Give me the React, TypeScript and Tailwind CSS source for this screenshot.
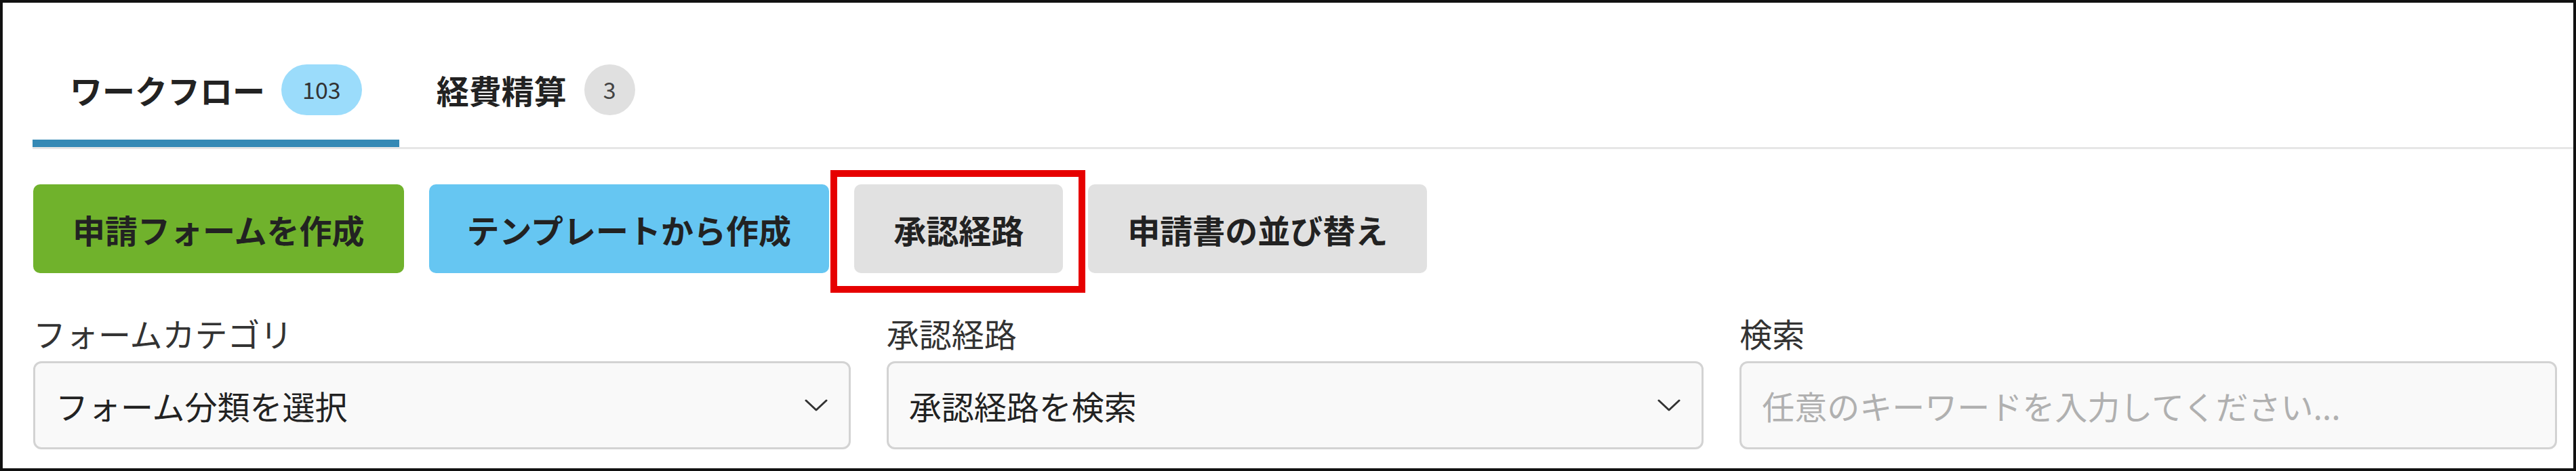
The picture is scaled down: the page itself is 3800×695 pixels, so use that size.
const tabs = [
  { label: 'ワークフロー', count: '103', active: true },
  { label: '経費精算', count: '3', active: false },
];

function Chevron() {
  return (
    <svg width="34" height="19" viewBox="0 0 34 19" fill="none" className="shrink-0">
      <polyline points="2,2 17,16 32,2" stroke="#333" strokeWidth="3" strokeLinecap="round" strokeLinejoin="round" />
    </svg>
  );
}

function SelectBox({ text }: { text: string }) {
  return (
    <div className="flex items-center justify-between h-[130px] rounded-[12px] border-[3px] border-[#d3d3d3] bg-[#f9f9f9] pl-[30px] pr-[31px]">
      <span className="text-[48px] text-[#222]">{text}</span>
      <Chevron />
    </div>
  );
}

export default function App() {
  return (
    <div className="h-[695px] w-[3800px] border-4 border-[#111] bg-white pt-[54px] pl-[44px] font-['Noto_Sans_CJK_JP','Noto_Sans',sans-serif] leading-none">
      {/* tabs */}
      <div className="flex border-b-[3px] border-[#e6e6e6]">
        {tabs.map(t => (
          <div
            key={t.label}
            className={
              t.active
                ? 'flex items-center gap-[24px] h-[159px] px-[55px] border-b-[11px] border-[#3589b5]'
                : 'flex items-center gap-[26px] h-[159px] pl-[55px] pr-[53px] border-b-[11px] border-transparent'
            }
          >
            <span className="text-[48px] font-bold text-[#222]">{t.label}</span>
            <span
              className={
                t.active
                  ? 'flex items-center justify-center h-[75px] min-w-[75px] px-[31px] rounded-full bg-[#9bdcfb] text-[34px] text-[#333]'
                  : 'flex items-center justify-center h-[75px] min-w-[75px] rounded-full bg-[#e0e0e0] text-[34px] text-[#444]'
              }
            >
              {t.count}
            </span>
          </div>
        ))}
      </div>

      <div className="pl-[1px] pr-[24px]">
        {/* actions */}
        <div className="flex gap-[37px] mt-[52px]">
          <button className="h-[131px] px-[58px] rounded-[10px] bg-[#70b22c] text-[48px] font-bold text-[#222]">
            申請フォームを作成
          </button>
          <button className="h-[131px] px-[56px] rounded-[10px] bg-[#66c6f2] text-[48px] font-bold text-[#222]">
            テンプレートから作成
          </button>
          <div className="relative">
            <button className="h-[131px] px-[58px] rounded-[10px] bg-[#e1e1e1] text-[48px] font-bold text-[#222]">
              承認経路
            </button>
            <span className="absolute -left-[35px] -right-[33px] -top-[21px] -bottom-[29px] border-[10px] border-[#e60000] pointer-events-none" />
          </div>
          <button className="h-[131px] px-[58px] rounded-[10px] bg-[#e1e1e1] text-[48px] font-bold text-[#222]">
            申請書の並び替え
          </button>
        </div>

        {/* filters */}
        <div className="grid grid-cols-3 gap-[53px] mt-[55px]">
          <div>
            <div className="text-[48px] leading-[67px] text-[#333] mb-[8px]">フォームカテゴリ</div>
            <SelectBox text="フォーム分類を選択" />
          </div>
          <div>
            <div className="text-[48px] leading-[67px] text-[#333] mb-[8px]">承認経路</div>
            <SelectBox text="承認経路を検索" />
          </div>
          <div>
            <div className="text-[48px] leading-[67px] text-[#333] mb-[8px]">検索</div>
            <input
              type="text"
              placeholder="任意のキーワードを入力してください..."
              className="w-full h-[130px] rounded-[12px] border-[3px] border-[#d3d3d3] bg-[#f9f9f9] px-[30px] text-[48px] text-[#222] placeholder:text-[#b0b0b0] outline-none"
            />
          </div>
        </div>
      </div>
    </div>
  );
}
